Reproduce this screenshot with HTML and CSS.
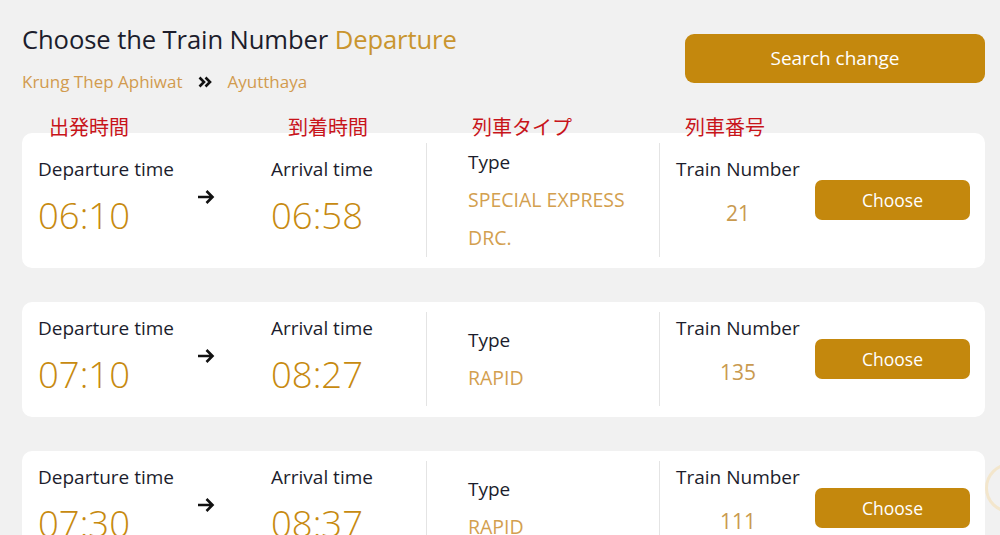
FILE: index.html
```html
<!DOCTYPE html>
<html lang="en">
<head>
<meta charset="utf-8">
<title>Choose the Train Number</title>
<link rel="stylesheet" href="styles.css">
</head>
<body>
<div class="page">
  <header class="top">
    <div class="heading">
      <h1 class="title">Choose the Train Number <span class="accent">Departure</span></h1>
      <div class="route">
        <span>Krung Thep Aphiwat</span>
        <svg class="chev" width="14" height="12" viewBox="0 0 14 12"><path d="M1.5 1.5 L6 6 L1.5 10.5 M7.5 1.5 L12 6 L7.5 10.5" fill="none" stroke="#111" stroke-width="2.6" stroke-linejoin="miter"/></svg>
        <span>Ayutthaya</span>
      </div>
    </div>
    <button class="btn-search">Search change</button>
  </header>

  <div class="labels">
    <span class="lb lb-dep">出発時間</span>
    <span class="lb lb-arr">到着時間</span>
    <span class="lb lb-type">列車タイプ</span>
    <span class="lb lb-num">列車番号</span>
  </div>

  <div class="list">
    <div class="card">
      <div class="col-time col-dep">
        <div class="tlabel">Departure time</div>
        <div class="tval">06:10</div>
      </div>
      <svg class="arrow" width="18" height="16" viewBox="0 0 18 16"><path d="M1 8 H15.5 M9.5 2 L15.5 8 L9.5 14" fill="none" stroke="#111" stroke-width="2.6"/></svg>
      <div class="col-time col-arr">
        <div class="tlabel">Arrival time</div>
        <div class="tval">06:58</div>
      </div>
      <div class="col-type">
        <div class="type-label">Type</div>
        <div class="type-val">SPECIAL EXPRESS</div>
        <div class="type-val">DRC.</div>
      </div>
      <div class="col-num">
        <div class="tlabel">Train Number</div>
        <div class="nval">21</div>
      </div>
      <button class="btn-choose">Choose</button>
    </div>

    <div class="card">
      <div class="col-time col-dep">
        <div class="tlabel">Departure time</div>
        <div class="tval">07:10</div>
      </div>
      <svg class="arrow" width="18" height="16" viewBox="0 0 18 16"><path d="M1 8 H15.5 M9.5 2 L15.5 8 L9.5 14" fill="none" stroke="#111" stroke-width="2.6"/></svg>
      <div class="col-time col-arr">
        <div class="tlabel">Arrival time</div>
        <div class="tval">08:27</div>
      </div>
      <div class="col-type">
        <div class="type-label">Type</div>
        <div class="type-val">RAPID</div>
      </div>
      <div class="col-num">
        <div class="tlabel">Train Number</div>
        <div class="nval">135</div>
      </div>
      <button class="btn-choose">Choose</button>
    </div>

    <div class="card">
      <div class="col-time col-dep">
        <div class="tlabel">Departure time</div>
        <div class="tval">07:30</div>
      </div>
      <svg class="arrow" width="18" height="16" viewBox="0 0 18 16"><path d="M1 8 H15.5 M9.5 2 L15.5 8 L9.5 14" fill="none" stroke="#111" stroke-width="2.6"/></svg>
      <div class="col-time col-arr">
        <div class="tlabel">Arrival time</div>
        <div class="tval">08:37</div>
      </div>
      <div class="col-type">
        <div class="type-label">Type</div>
        <div class="type-val">RAPID</div>
      </div>
      <div class="col-num">
        <div class="tlabel">Train Number</div>
        <div class="nval">111</div>
      </div>
      <button class="btn-choose">Choose</button>
    </div>
  </div>
</div>
<div class="float-ring"></div>
</body>
</html>
```

FILE: styles.css
```css
* { box-sizing: border-box; }

html, body {
  margin: 0;
  padding: 0;
  background: #f1f1f1;
  font-family: "Open Sans", "Noto Sans", "Noto Sans CJK JP", sans-serif;
  color: #1c1d2c;
  overflow: hidden;
  height: 535px;
}

.page {
  padding: 24px 15px 0 22px;
}

.top {
  display: flex;
  justify-content: space-between;
  align-items: flex-start;
}

.title {
  margin: 0;
  font-size: 25.6px;
  line-height: 32px;
  font-weight: 400;
  letter-spacing: -0.1px;
  color: #1c1d2c;
}

.accent { color: #c9952f; }

.route {
  margin-top: 13px;
  display: flex;
  align-items: center;
  font-size: 17px;
  line-height: 26px;
  color: #d19b4f;
}

.chev { margin: 0 16px 0 15px; }

.btn-search {
  margin-top: 10px;
  width: 300px;
  height: 49px;
  padding-bottom: 2px;
  border: 0;
  border-radius: 9px;
  background: #c4880d;
  color: #fff;
  font-family: inherit;
  font-size: 19px;
}

.labels {
  margin-top: 22px;
  margin-bottom: -4px;
  display: flex;
  font-family: "Noto Sans CJK JP", sans-serif;
  font-size: 20px;
  line-height: 20px;
  color: #c8141a;
  position: relative;
  z-index: 1;
}

.lb-dep { padding-left: 27px; width: 266px; }
.lb-arr { width: 184px; }
.lb-type { width: 213px; }

.list {
  display: flex;
  flex-direction: column;
  gap: 34px;
}

.card {
  background: #fff;
  border-radius: 10px;
  min-height: 115px;
  padding: 10px 15px 11px 16px;
  display: flex;
  align-items: center;
}

.col-time {
  align-self: center;
}

.col-dep { width: 159px; }

.tlabel {
  font-size: 19px;
  line-height: 31px;
  white-space: nowrap;
}

.tval {
  font-size: 36.5px;
  line-height: 61px;
  color: #c78a10;
  font-weight: 300;
}

.arrow {
  margin: -7px 56px 0 0;
}

.col-arr {
  width: 155px;
  align-self: stretch;
  display: flex;
  flex-direction: column;
  justify-content: center;
}

.col-type {
  align-self: stretch;
  border-left: 1.5px solid #e4e4e4;
  width: 233px;
  padding-left: 41px;
  display: flex;
  flex-direction: column;
  justify-content: center;
}

.type-label {
  font-size: 19px;
  line-height: 38px;
}

.type-val {
  font-size: 19.5px;
  line-height: 38px;
  color: #d3a04f;
}

.col-num {
  align-self: stretch;
  border-left: 1.5px solid #e4e4e4;
  padding-left: 16px;
  display: flex;
  flex-direction: column;
  justify-content: center;
  align-items: center;
}

.nval {
  font-size: 21px;
  line-height: 61px;
  color: #c99a4f;
}

.col-num .tlabel { line-height: 27px; }

.btn-choose {
  margin-left: auto;
  width: 155px;
  height: 40px;
  border: 0;
  border-radius: 7px;
  background: #c4880d;
  color: #fff;
  font-family: inherit;
  font-size: 17.5px;
}

.float-ring {
  position: fixed;
  left: 985px;
  top: 463px;
  width: 50px;
  height: 50px;
  border: 3px solid #f3e6cc;
  border-radius: 50%;
}
```
